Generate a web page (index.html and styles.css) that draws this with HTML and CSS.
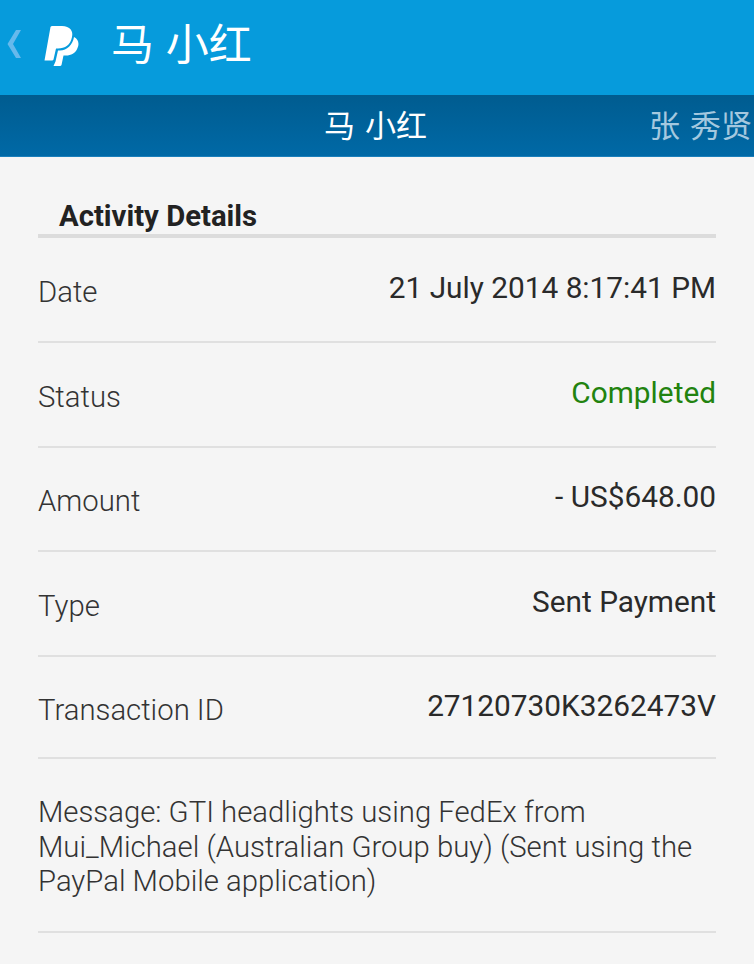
FILE: index.html
```html
<!DOCTYPE html>
<html lang="en">
<head>
    <meta charset="UTF-8">
    <meta name="viewport" content="width=device-width, initial-scale=1.0">
    <title>Activity Details</title>
    <link rel="stylesheet" href="styles.css">
</head>
<body>
    <header class="topbar">
        <svg class="back" width="15" height="30" viewBox="0 0 15 30"><path d="M14 1 L6 15 L14 29 L9 29 L0.5 15 L9 1 Z" fill="#66b9ec"/></svg>
        <svg class="logo" width="35" height="40" viewBox="0 0 35 40">
            <!-- front P -->
            <path d="M6.5 1 Q6.8 0 8.5 0 H18 C26 0 29.5 5 28 11 C26.5 19 21 22.5 14 22.5 H12 L9.5 33.5 Q9.3 34.5 8 34.5 H0.5 Z" fill="#fff"/>
            <!-- back P -->
            <path d="M30 11 C34.5 13 35.5 18 33.5 22 C31.5 27.5 27 29.5 22 29.5 H19.5 L17.5 39 Q17.2 40 16 40 H9.5 L11.5 35.5 L14 24.5 H16 C23 24.5 28.5 19 30 11 Z" fill="#fff"/>
        </svg>
        <span class="topbar-title">马 小红</span>
    </header>

    <nav class="tabs">
        <span class="tab-active">马 小红</span>
        <span class="tab-next">张 秀贤</span>
    </nav>

    <main class="content">
        <h2 class="section-title">Activity Details</h2>

        <div class="row">
            <span class="label">Date</span>
            <span class="value">21 July 2014 8:17:41 PM</span>
        </div>
        <div class="row">
            <span class="label">Status</span>
            <span class="value completed">Completed</span>
        </div>
        <div class="row">
            <span class="label">Amount</span>
            <span class="value">- US$648.00</span>
        </div>
        <div class="row">
            <span class="label">Type</span>
            <span class="value">Sent Payment</span>
        </div>
        <div class="row row-last">
            <span class="label">Transaction ID</span>
            <span class="value">27120730K3262473V</span>
        </div>

        <p class="message">Message: GTI headlights using FedEx from Mui_Michael (Australian Group buy) (Sent using the PayPal Mobile application)</p>
    </main>
</body>
</html>
```

FILE: styles.css
```css
html, body {
    margin: 0;
    padding: 0;
}
body {
    width: 754px;
    height: 964px;
    overflow: hidden;
    background-color: #f5f5f5;
    font-family: Roboto, "Noto Sans CJK SC", sans-serif;
    color: #2a2a2a;
}

.topbar {
    height: 95px;
    background-color: #069bdc;
    display: flex;
    align-items: center;
    box-sizing: border-box;
    padding-left: 7px;
}
.back {
    margin-top: -7px;
}
.logo {
    margin-left: 22px;
    margin-top: -4px;
}
.topbar-title {
    margin-left: 32px;
    margin-top: -14px;
    font-family: "Noto Sans CJK SC", sans-serif;
    font-size: 43px;
    color: #fff;
    word-spacing: 2px;
}

.tabs {
    height: 62px;
    box-sizing: border-box;
    padding-bottom: 4px;
    background: linear-gradient(#005c90, #0069a6);
    border-bottom: 1px solid #1a7fbb;
    display: flex;
    align-items: center;
    justify-content: flex-end;
    font-family: "Noto Sans CJK SC", sans-serif;
    font-size: 31px;
    word-spacing: 3px;
    white-space: nowrap;
}
.tab-active {
    color: #fff;
    margin-right: 222px;
}
.tab-next {
    color: #a4c8df;
    margin-right: 2px;
}

.content {
    padding: 0 38px;
}
.section-title {
    margin: 0;
    padding: 43px 0 0 21px;
    height: 34px;
    font-size: 29.3px;
    line-height: 32px;
    font-weight: 700;
    color: #222;
    border-bottom: 4px solid #dcdcdc;
}
.row {
    height: 102.8px;
    border-bottom: 2px solid #e0e0e0;
    display: flex;
    justify-content: space-between;
    align-items: center;
    font-size: 29.3px;
}
.row-last {
    height: 100px;
}
.label {
    font-weight: 300;
    color: #333;
    padding-top: 5px;
}
.value {
    padding-bottom: 4px;
    font-size: 29.8px;
    color: #2a2a2a;
}
.completed {
    color: #22830f;
}
.message {
    margin: 0;
    padding: 36px 0 32px;
    border-bottom: 2px solid #e0e0e0;
    font-size: 29.3px;
    font-weight: 300;
    line-height: 34.5px;
    color: #333;
}
```
